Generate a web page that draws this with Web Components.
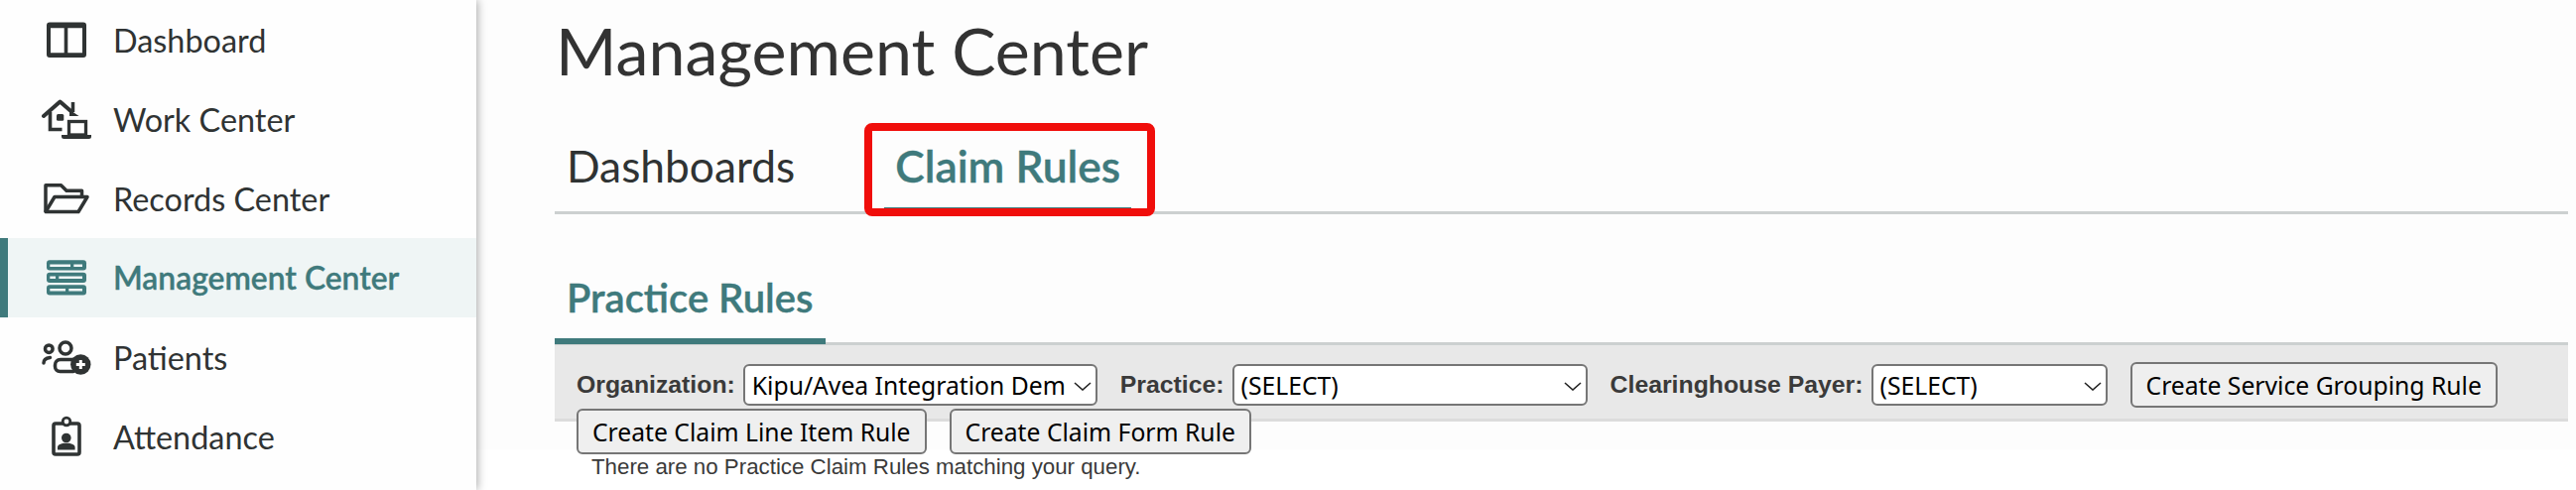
<!DOCTYPE html>
<html lang="en"><head><meta charset="utf-8"><title>Management Center</title>
<style>
html,body{margin:0;padding:0;height:494px;overflow:hidden;background:#fff;font-family:Lato,sans-serif;color:#2f3333}
</style></head><body>
<app-shell>
  <side-nav slot="nav">
    <nav-item label="Dashboard" icon="dashboard"></nav-item>
    <nav-item label="Work Center" icon="work"></nav-item>
    <nav-item label="Records Center" icon="records"></nav-item>
    <nav-item label="Management Center" icon="management" active></nav-item>
    <nav-item label="Patients" icon="patients"></nav-item>
    <nav-item label="Attendance" icon="attendance"></nav-item>
  </side-nav>
  <page-title>Management Center</page-title>
  <tab-bar size="lg">
    <tab-item>Dashboards</tab-item>
    <tab-item active callout>Claim Rules</tab-item>
  </tab-bar>
  <tab-bar size="sm">
    <tab-item active>Practice Rules</tab-item>
  </tab-bar>
  <rule-toolbar>
    <select-field label="Organization:" value="Kipu/Avea Integration Dem" width="357"></select-field>
    <select-field label="Practice:" value="(SELECT)" width="358"></select-field>
    <select-field label="Clearinghouse Payer:" value="(SELECT)" width="238"></select-field>
    <action-button>Create Service Grouping Rule</action-button>
    <action-button>Create Claim Line Item Rule</action-button>
    <action-button>Create Claim Form Rule</action-button>
  </rule-toolbar>
  <empty-note>There are no Practice Claim Rules matching your query.</empty-note>
</app-shell>
<script>
const ICONS={
dashboard:`<svg viewBox="42 15 50 50"><path fill="currentColor" fill-rule="evenodd" d="M50 22.500h34a3 3 0 0 1 3 3V55a3 3 0 0 1-3 3H50a3 3 0 0 1-3-3V25.500a3 3 0 0 1 3-3zM51 28.300v25h13.700v-25zM68.300 28.300v25H83v-25z"/></svg>`,
work:`<svg viewBox="42 95 50 50" fill="none" stroke="currentColor"><path d="M44 117 60.500 102.500 72 112.500" stroke-width="4" stroke-linejoin="round" stroke-linecap="round"/><path d="M73.500 103v10" stroke-width="3.500"/><path d="M70 110.500l9.500 6.500H70z" fill="currentColor" stroke="none"/><path d="M50.500 113v17.500h12" stroke-width="3.600"/><rect x="57" y="115" width="7.300" height="6.800" rx="1.500" fill="currentColor" stroke="none"/><rect x="69.500" y="122.500" width="17" height="13.500" stroke-width="3.300"/><path d="M62 136h30v1.500a2.500 2.500 0 0 1-2.500 2.500h-25a2.500 2.500 0 0 1-2.500-2.500z" fill="currentColor" stroke="none"/></svg>`,
records:`<svg viewBox="42 175 50 50" fill="none" stroke="currentColor" stroke-width="3.500" stroke-linejoin="round"><path d="M46 213.500V186.800h15.500l5.500 5.500h15.500v6"/><path d="M46 213.500h33L88 198.500H55L46 213.500z"/></svg>`,
management:`<svg viewBox="42 255 50 50"><g fill="currentColor"><rect x="47" y="262.300" width="40" height="10.300" rx="3"/><rect x="47" y="274.800" width="40" height="10.300" rx="3"/><rect x="47" y="287.300" width="40" height="10.300" rx="3"/></g><g fill="#eff5f5"><rect x="50.300" y="266.500" width="20.700" height="2.500"/><rect x="74.300" y="266.500" width="8.700" height="2.500"/><rect x="50.300" y="278.500" width="5.700" height="2.500"/><rect x="59.300" y="278.500" width="23.700" height="2.500"/><rect x="50.300" y="291" width="15.700" height="2.500"/><rect x="69.300" y="291" width="13.700" height="2.500"/></g></svg>`,
patients:`<svg viewBox="42 335 50 50" fill="none" stroke="currentColor" stroke-width="3.500" stroke-linecap="round"><circle cx="66" cy="351" r="6"/><circle cx="49.300" cy="351.700" r="3.800"/><path d="M44 366c0-3 2.500-5 6.500-5.500"/><path d="M74 362.500H61c-3.500 0-5.500 2.500-5.500 5.500v1.500c0 3 2 5 5 5H74"/><circle cx="81.300" cy="367.500" r="10.200" fill="currentColor" stroke="none"/><path d="M81.300 363v9M76.800 367.500h9" stroke="#fff" stroke-width="3" stroke-linecap="butt"/></svg>`,
attendance:`<svg viewBox="42 415 50 50"><rect x="54" y="427" width="26" height="31" rx="2" fill="none" stroke="currentColor" stroke-width="3.600"/><circle cx="67" cy="425" r="3.800" fill="#fff" stroke="currentColor" stroke-width="2.800"/><circle cx="66.800" cy="441.500" r="4.800" fill="currentColor"/><path d="M58 453.500v-2.500c0-2.500 3.300-4.200 8.800-4.200s8.800 1.700 8.800 4.200v2.500z" fill="currentColor"/></svg>`
};
function def(name,css,html){
  customElements.define(name,class extends HTMLElement{
    constructor(){super();this.attachShadow({mode:'open'});}
    connectedCallback(){
      const h=typeof html==='function'?html(this):html;
      this.shadowRoot.innerHTML=`<style>${css}</style>${h}`;
    }
  });
}
def('app-shell',`:host{display:flex;height:494px;background:linear-gradient(#fdfdfd 453px,#fff 453px)}
 .nav{flex:0 0 480px}
 main{flex:1;min-width:0;padding:0 8px 0 79px;display:flex;flex-direction:column}`,
 `<div class="nav"><slot name="nav"></slot></div><main><slot></slot></main>`);
def('side-nav',`:host{display:block;width:480px;height:494px;background:#fefefe;box-shadow:1px 0 9px rgba(0,0,0,.35);position:relative}`,`<slot></slot>`);
def('nav-item',`:host{display:flex;align-items:center;height:80px;box-sizing:border-box;padding-left:42px;gap:22px;font:400 32.4px Lato,sans-serif;color:#2f3333}
 :host([active]){background:#eff5f5;color:#3f7a7c;font-weight:600;font-size:31.8px;-webkit-text-stroke:.35px #3f7a7c;border-left:8px solid #3f7a7c;padding-left:34px}
 svg{width:50px;height:50px;flex:none;display:block}`,
 el=>ICONS[el.getAttribute('icon')]+`<span>${el.getAttribute('label')}</span>`);
def('page-title',`:host{display:block;font:400 66.3px/1 Lato,sans-serif;color:#333;padding:18px 0 0 1px;height:100px;box-sizing:border-box}`,`<slot></slot>`);
def('tab-bar',`:host{display:flex;gap:78px;border-bottom:3px solid #ccd0d0}
 :host([size=lg]){height:116px;box-sizing:border-box;padding-top:18px;font:400 44.300px Lato,sans-serif}
 :host([size=sm]){height:132px;box-sizing:border-box;padding-top:38px;font:600 40px Lato,sans-serif}`,`<slot></slot>`);
def('tab-item',`:host{display:flex;align-items:center;position:relative;padding:0 12px;box-sizing:border-box;color:#2f3333;margin-bottom:-2px}
 :host([active]){color:#3f7a7c;font-weight:600;-webkit-text-stroke:.4px #3f7a7c;border-bottom:6px solid #3f7a7c;padding-top:5px}
 :host([callout]){padding:5px 11px 0}
 .red{position:absolute;left:-20px;right:-24px;top:6px;bottom:-9px;border:8px solid #f00e0b;border-radius:8px;pointer-events:none}`,
 el=>`<slot></slot>`+(el.hasAttribute('callout')?`<div class="red"></div>`:''));
def('rule-toolbar',`:host{display:flex;flex-wrap:wrap;align-content:flex-start;align-items:center;column-gap:23px;row-gap:1px;height:77px;box-sizing:border-box;padding:17px 40px 0 22px;background:#e8e8e8;border-bottom:3px solid #dcdcdc}`,`<slot></slot>`);
def('select-field',`:host{display:inline-flex;align-items:center;gap:8px;font:700 24.800px "Liberation Sans",sans-serif;color:#3a3a3a}
 .w{position:relative;display:block;height:42px}
 select{font:400 24.700px "Noto Sans",sans-serif;color:#000;height:42px;width:100%;box-sizing:border-box;background:#fff;border:2px solid #767676;border-radius:6px;padding:0 28px 0 7px;appearance:none;display:block}
 svg{position:absolute;right:6px;top:18px;width:18px;height:9px}`,
 el=>`<span>${el.getAttribute('label')}</span><span class="w" style="width:${el.getAttribute('width')}px"><select><option>${el.getAttribute('value')}</option></select><svg viewBox="0 0 18 9"><path d="M1 1l8 7 8-7" fill="none" stroke="#222" stroke-width="1.600"/></svg></span>`);
def('action-button',`:host{display:inline-block}
 button{font:400 24.700px "Noto Sans",sans-serif;color:#000;height:46px;box-sizing:border-box;background:#efefef;border:2px solid #767676;border-radius:6px;padding:0 14px;white-space:nowrap;display:block}`,`<button><slot></slot></button>`);
def('empty-note',`:host{display:block;font:400 22.300px "Liberation Sans",sans-serif;color:#3a3a3a;padding:33px 0 0 37px;line-height:26px}`,`<slot></slot>`);
</script>
</body></html>
